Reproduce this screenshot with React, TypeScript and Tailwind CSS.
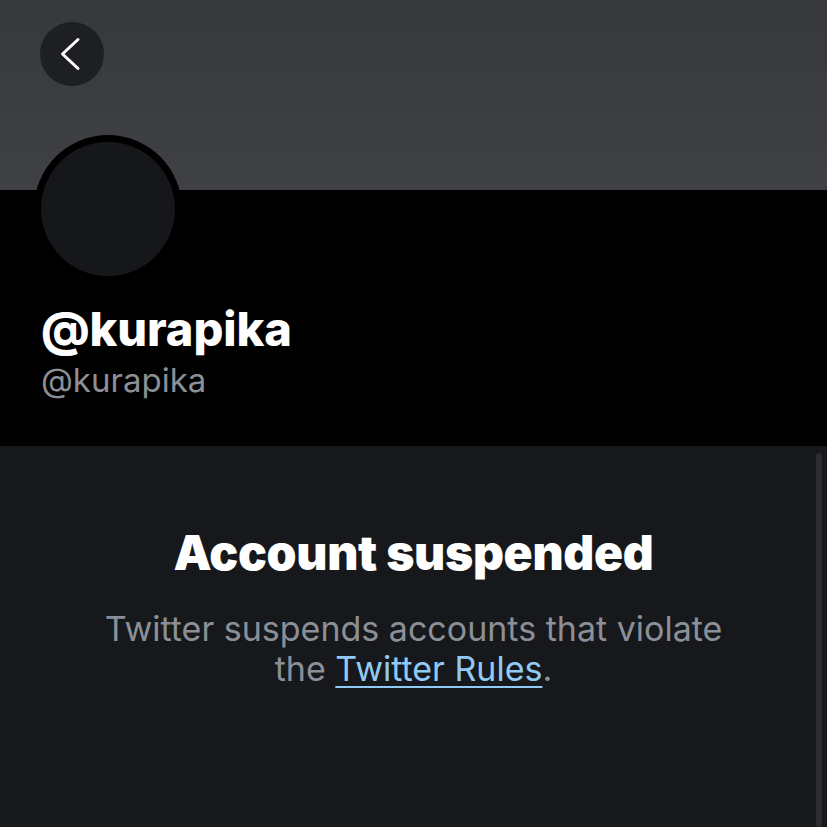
export default function App() {
  return (
    <div
      className="w-[827px] h-[827px] overflow-hidden bg-[#17181b] flex flex-col"
      style={{ fontFamily: "Inter, 'Noto Sans', sans-serif" }}
    >
      {/* Banner */}
      <div className="relative h-[190px] shrink-0 bg-gradient-to-b from-[#36383c] to-[#3f4145] px-[40px] pt-[22px]">
        <button className="w-[64px] h-[64px] rounded-full bg-[#1e1f22] flex items-center justify-center">
          <svg width="64" height="64" viewBox="0 0 64 64" fill="none" stroke="white" strokeWidth="3" strokeLinecap="round" strokeLinejoin="round">
            <path d="M38 17.5 L22.5 32 L38 46.5" />
          </svg>
        </button>
        {/* Avatar */}
        <div className="absolute left-[34px] top-[135px] w-[148px] h-[148px] rounded-full bg-black p-[7px]">
          <div className="w-full h-full rounded-full bg-[#16171a]" />
        </div>
      </div>

      {/* Profile header */}
      <div className="h-[256px] shrink-0 bg-black px-[41px] pt-[111px]">
        <div className="text-white text-[47px] leading-[56px] font-extrabold tracking-[-0.1px]">@kurapika</div>
        <div className="text-[#8b8f96] text-[33px] leading-[40px] mt-[3px]">@kurapika</div>
      </div>

      {/* Suspended notice */}
      <div className="relative flex-1 flex flex-col items-center pt-[78px]">
        <h1 className="text-white text-[48px] leading-[58px] font-black tracking-[-0.3px]">Account suspended</h1>
        <p className="mt-[27px] text-center text-[#8b9098] text-[34px] leading-[40px]">
          Twitter suspends accounts that violate
          <br />
          the <a className="text-[#8fcbf6] underline underline-offset-[5px] decoration-2">Twitter Rules</a>.
        </p>
        <div className="absolute right-[5px] top-[7px] bottom-0 w-[6px] rounded-full bg-[#2b2c2f]" />
      </div>
    </div>
  );
}
